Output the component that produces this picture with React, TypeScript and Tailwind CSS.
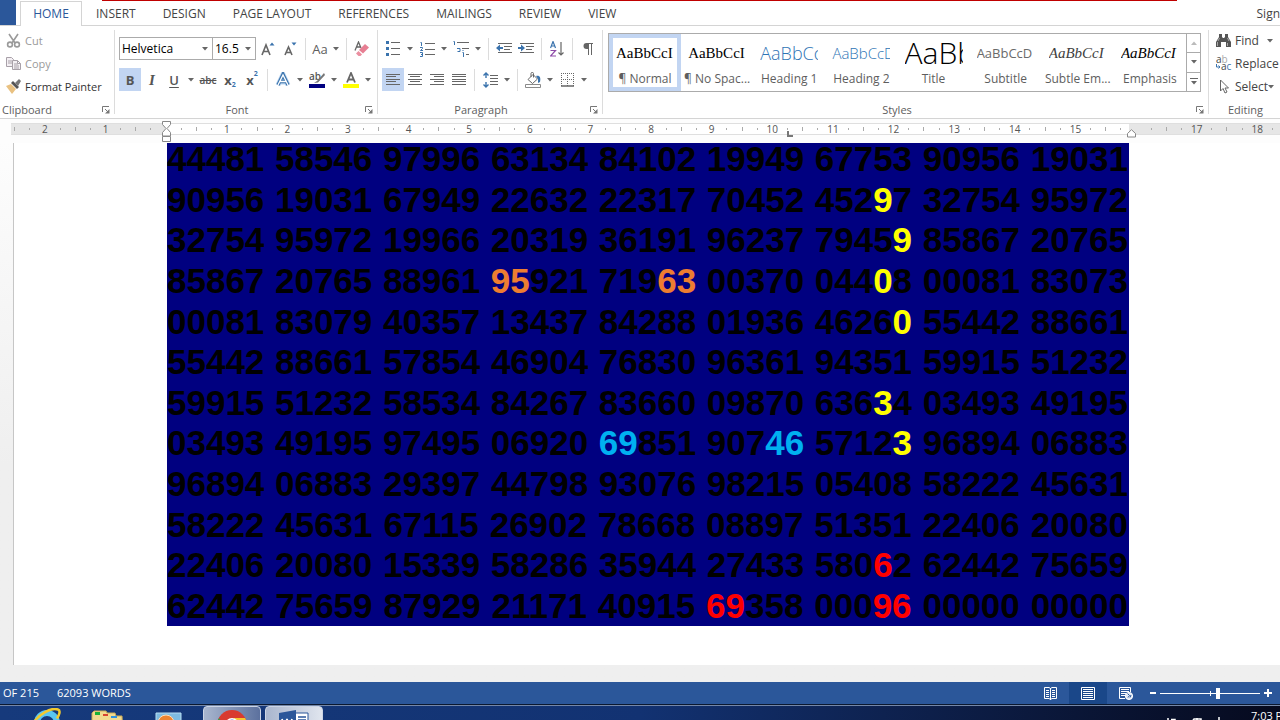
import React from "react";

type Kids = { children?: React.ReactNode };

const BLUE = "#3a73ad";
const GREY = "#666666";

function Arrow({ className = "fill-[#666]" }: { className?: string }) {
  return (
    <svg width="6" height="4" viewBox="0 0 6 4" className={className} aria-hidden="true">
      <path d="M0 0h6L3 3.6z" />
    </svg>
  );
}

function Tool({ label, active, children }: Kids & { label: string; active?: boolean }) {
  return (
    <button
      type="button"
      aria-label={label}
      aria-pressed={active}
      className={`flex h-[23px] w-[22px] shrink-0 items-center justify-center ${active ? "bg-[#c2d5f2]" : "hover:bg-[#d5e1f2]"}`}
    >
      {children}
    </button>
  );
}

function Drop({ label }: { label: string }) {
  return (
    <button type="button" aria-label={label} className="flex h-[23px] w-3 shrink-0 items-center justify-center">
      <Arrow />
    </button>
  );
}

function Sep() {
  return <span className="mx-1 h-[22px] w-px shrink-0 bg-[#dcdcdc]" />;
}

function Launcher({ label }: { label: string }) {
  return (
    <button type="button" aria-label={label} className="shrink-0">
      <svg width="8" height="8" viewBox="0 0 8 8" fill="none" stroke="#777" aria-hidden="true">
        <path d="M.5 6V.5H7M3 3l3 3" />
        <path d="M7.5 3v4.500H3z" fill="#777" stroke="none" />
      </svg>
    </button>
  );
}

function Group({
  name,
  className,
  labelClass = "pr-2.5 text-center",
  launcher = true,
  children,
}: Kids & { name: string; className: string; labelClass?: string; launcher?: boolean }) {
  return (
    <section aria-label={name} className={`flex h-[84px] shrink-0 flex-col border-r border-[#dcdcdc] ${className}`}>
      <div className="h-[75px] shrink-0">{children}</div>
      <div className="flex h-[9px] items-center text-[11px] leading-3 text-[#5e5e5e]">
        <span className={`flex-1 ${labelClass}`}>{name}</span>
        {launcher && <Launcher label={`${name} settings`} />}
      </div>
    </section>
  );
}

function Lines({ rows }: { rows: [number, number][] }) {
  return (
    <svg width="16" height="13" viewBox="0 0 16 13" stroke={GREY} aria-hidden="true">
      {rows.map(([a, b], i) => (
        <path key={i} d={`M${a} ${i * 2.5 + 1}H${b}`} strokeWidth="1" shapeRendering="crispEdges" />
      ))}
    </svg>
  );
}

const tabs = ["INSERT", "DESIGN", "PAGE LAYOUT", "REFERENCES", "MAILINGS", "REVIEW", "VIEW"];

function Tabs() {
  return (
    <nav className="flex h-[26px] shrink-0 items-stretch border-b border-[#d4d4d4] text-[12px] leading-4 text-[#444]">
      <span className="mr-1 h-[25px] w-4 shrink-0 bg-[#2b579a]" />
      <a href="#home" className="-mb-px mt-px flex w-[62px] shrink-0 items-center justify-center border border-b-0 border-[#d4d4d4] bg-white text-[#2b579a]">
        HOME
      </a>
      <div className="flex flex-1 flex-col">
        <span className="ml-5 mr-[103px] h-px shrink-0 bg-[#c00000]" />
        <div className="flex flex-1 items-center pl-[14px] pt-0.5">
          <div className="flex gap-[27px]">
            {tabs.map((t) => (
              <a key={t} href={`#${t.toLowerCase().replace(" ", "-")}`} className="whitespace-nowrap">
                {t}
              </a>
            ))}
          </div>
          <a href="#sign-in" className="ml-auto">Sign</a>
        </div>
      </div>
    </nav>
  );
}

function Clipboard() {
  return (
    <Group name="Clipboard" className="w-[115px] pr-1" labelClass="pl-0.5">
      <div className="-mt-px flex flex-col pl-1.5 text-[11px] leading-[23px]">
        <button type="button" className="flex items-center gap-1 text-[#9a9a9a]">
          <svg width="15" height="15" viewBox="0 0 15 15" fill="none" stroke="#9a9a9a" strokeWidth="1.600" aria-hidden="true">
            <path d="M3 1l6 9M12 1L6 10" />
            <circle cx="4" cy="11.500" r="2.400" />
            <circle cx="11" cy="11.500" r="2.400" />
          </svg>
          Cut
        </button>
        <button type="button" className="flex items-center gap-1 text-[#9a9a9a]">
          <svg width="15" height="15" viewBox="0 0 15 15" fill="#f4f0f4" stroke="#a8a0a8" aria-hidden="true">
            <path d="M.5 1.500h5l2 2v7h-7zM2 5h4M2 7h4" />
            <path d="M6.500 4.500h5l3 3v6h-8zM8 8h4M8 10h5M8 12h5M11.500 4.500v3h3" />
          </svg>
          Copy
        </button>
        <button type="button" className="flex items-center gap-1 whitespace-nowrap text-[#333]">
          <svg width="15" height="15" viewBox="0 0 15 15" aria-hidden="true">
            <path d="M0 7l5-2 5 5-4 5z" fill="#e9c181" />
            <path d="M5 4l2-2 6 6-2 2z" fill="#555" />
            <path d="M9 4l4-4 2 2-3 5z" fill="#777" />
          </svg>
          Format Painter
        </button>
      </div>
    </Group>
  );
}

function FontGroup() {
  return (
    <Group name="Font" className="w-[263px] pl-1 pr-1">
      <div className="-mt-px mb-2 flex items-center pt-2">
        <label className="flex h-[23px] w-[94px] shrink-0 items-center border border-[#ababab] bg-white pr-1">
          <input aria-label="Font name" defaultValue="Helvetica" className="w-0 flex-1 px-0.5 text-[12px] text-black outline-none" />
          <Arrow />
        </label>
        <label className="mr-px flex h-[23px] w-[43px] shrink-0 items-center border border-l-0 border-[#ababab] bg-white pr-1">
          <input aria-label="Font size" defaultValue="16.5" className="w-0 flex-1 px-0.5 text-[12px] text-black outline-none" />
          <Arrow />
        </label>
        <Tool label="Grow font">
          <svg width="14" height="14" viewBox="0 0 14 14" fill="none" aria-hidden="true">
            <path d="M1 13L5 3l4 10M2.500 9.500h5" stroke={GREY} strokeWidth="1.600" />
            <path d="M8.500 3.500L11 .5l2.500 3z" fill={BLUE} />
          </svg>
        </Tool>
        <Tool label="Shrink font">
          <svg width="14" height="14" viewBox="0 0 14 14" fill="none" aria-hidden="true">
            <path d="M2 13l3.500-8L9 13M3.500 10.500h4" stroke={GREY} strokeWidth="1.600" />
            <path d="M8.500.5h5L11 3.500z" fill={BLUE} />
          </svg>
        </Tool>
        <Sep />
        <button type="button" aria-label="Change case" className="w-5 shrink-0 text-[13px] leading-5 text-[#5e5e5e]">Aa</button>
        <Drop label="Case options" />
        <Sep />
        <Tool label="Clear formatting">
          <svg width="16" height="16" viewBox="0 0 16 16" aria-hidden="true">
            <path d="M1 9.500L4.500 1 7 7M2.500 6h4" fill="none" stroke={GREY} strokeWidth="1.300" />
            <path d="M11 3l4 3.500-6 6L5 9z" fill="#e77f93" />
            <path d="M4.500 10L8 13.500 6.500 15H4.500l-2.500-2.500z" fill="#eb8fa0" />
          </svg>
        </Tool>
      </div>
      <div className="flex items-center text-[13px] leading-5 text-[#555]">
        <Tool label="Bold" active><b>B</b></Tool>
        <Tool label="Italic"><i className="font-['Liberation_Serif',serif] text-[15px] font-bold">I</i></Tool>
        <Tool label="Underline"><span className="font-semibold underline underline-offset-2">U</span></Tool>
        <Drop label="Underline options" />
        <Tool label="Strikethrough"><span className="text-[10px] font-semibold line-through">abc</span></Tool>
        <Tool label="Subscript"><b>x</b><span className="self-end text-[7px] font-bold leading-3 text-[#3a73ad]">2</span></Tool>
        <Tool label="Superscript"><b>x</b><span className="self-start text-[7px] font-bold leading-3 text-[#3a73ad]">2</span></Tool>
        <Sep />
        <Tool label="Text effects">
          <svg width="16" height="16" viewBox="0 0 16 16" aria-hidden="true">
            <path d="M3 13L8 2.500 13 13M5 10h6" fill="none" stroke="#bcd6f0" strokeWidth="5" />
            <path d="M3 13L8 2.500 13 13M5 9.500h6" fill="none" stroke={BLUE} strokeWidth="3.400" />
            <path d="M3 13L8 3l5 10M5 9.500h6" fill="none" stroke="#fff" strokeWidth="1.300" />
          </svg>
        </Tool>
        <Drop label="Effect options" />
        <Tool label="Highlight colour">
          <svg width="16" height="16" viewBox="0 0 16 16" overflow="visible" aria-hidden="true">
            <text x="0" y="8" fontSize="10" fontWeight="600" fill="#555">ab</text>
            <path d="M15 1L8 9l-3 2 4-.5L16 3z" fill="#777" />
            <path d="M0 12h16v4H0z" fill="#000080" />
          </svg>
        </Tool>
        <Drop label="Highlight options" />
        <Tool label="Font colour">
          <svg width="16" height="16" viewBox="0 0 16 16" aria-hidden="true">
            <path d="M4 10.500L8 1l4 9.500M5 7.500h6" fill="none" stroke={GREY} strokeWidth="1.800" />
            <path d="M0 12h16v4H0z" fill="#ffff00" />
          </svg>
        </Tool>
        <Drop label="Font colour options" />
      </div>
    </Group>
  );
}

function ParagraphGroup() {
  return (
    <Group name="Paragraph" className="w-[225px] pl-1 pr-1">
      <div className="-mt-px mb-2 flex items-center pt-2">
        <Tool label="Bullets">
          <svg width="14" height="15" viewBox="0 0 14 15" aria-hidden="true">
            <path d="M0 0h3v3H0zM0 6h3v3H0zM0 12h3v3H0z" fill={BLUE} />
            <path d="M5 1.500h9M5 7.500h9M5 13.500h9" stroke={GREY} />
          </svg>
        </Tool>
        <Drop label="Bullet options" />
        <Tool label="Numbering">
          <svg width="15" height="16" viewBox="0 0 15 16" aria-hidden="true">
            <path d="M.5 1.500h1V5M0 6.500h2.500v1L.5 9.500H3M0 11.500h2.500v4H0M1 13.500h1.500" fill="none" stroke={BLUE} />
            <path d="M5 2.500h10M5 8.500h10M5 13.500h10" stroke={GREY} />
          </svg>
        </Tool>
        <Drop label="Numbering options" />
        <Tool label="Multilevel list">
          <svg width="17" height="16" viewBox="0 0 17 16" aria-hidden="true">
            <path d="M.5.500h1V4M4 7.500h3M4.500 10.500H7V7.500M9.500 11.500h1V16M10 9v1" fill="none" stroke={BLUE} />
            <path d="M4 1.500h12M9 7.500h7M13 13.500h3" stroke={GREY} />
          </svg>
        </Tool>
        <Drop label="Multilevel options" />
        <Sep />
        <Tool label="Decrease indent">
          <svg width="16" height="12" viewBox="0 0 16 12" aria-hidden="true">
            <path d="M2 .5h14M8 3.500h8M8 6.500h6M2 9.500h14" stroke={GREY} />
            <path d="M0 5l4-3.500V4h3v2H4v2.500z" fill={BLUE} />
          </svg>
        </Tool>
        <Tool label="Increase indent">
          <svg width="16" height="12" viewBox="0 0 16 12" aria-hidden="true">
            <path d="M2 .5h14M8 3.500h8M8 6.500h6M2 9.500h14" stroke={GREY} />
            <path d="M7 5L3 1.500V4H0v2h3v2.500z" fill={BLUE} />
          </svg>
        </Tool>
        <Sep />
        <Tool label="Sort">
          <svg width="14" height="16" viewBox="0 0 14 16" fill="none" aria-hidden="true">
            <path d="M.5 7L3 .5 5.500 7M1.500 5h3" stroke={BLUE} strokeWidth="1.200" />
            <path d="M.5 9.500h5l-5 5.500H6" stroke="#8e4ba8" strokeWidth="1.200" />
            <path d="M11 1v13M8.500 11.500L11 14l2.500-2.500" stroke={GREY} strokeWidth="1.200" />
          </svg>
        </Tool>
        <Sep />
        <Tool label="Show marks">
          <svg width="10" height="12" viewBox="0 0 10 12" aria-hidden="true">
            <path d="M10 0H3.500a3 3 0 000 6H5v6h1V1h2v11h1V1h1z" fill={GREY} />
          </svg>
        </Tool>
      </div>
      <div className="flex items-center">
        <Tool label="Align left" active><Lines rows={[[1, 15], [1, 11], [1, 15], [1, 11], [1, 15]]} /></Tool>
        <Tool label="Centre"><Lines rows={[[1, 15], [3, 13], [1, 15], [3, 13], [1, 15]]} /></Tool>
        <Tool label="Align right"><Lines rows={[[1, 15], [5, 15], [1, 15], [5, 15], [1, 15]]} /></Tool>
        <Tool label="Justify"><Lines rows={[[1, 15], [1, 15], [1, 15], [1, 15], [1, 15]]} /></Tool>
        <Sep />
        <Tool label="Line spacing">
          <svg width="15" height="16" viewBox="0 0 15 16" fill="none" aria-hidden="true">
            <path d="M3 1v5M3 10v5M.5 3.500L3 1l2.500 2.500M.5 12.500L3 15l2.500-2.500" stroke={BLUE} strokeWidth="1.400" />
            <path d="M7 3.500h8M7 6.500h8M7 9.500h8M7 12.500h8" stroke={GREY} />
          </svg>
        </Tool>
        <Drop label="Spacing options" />
        <Sep />
        <Tool label="Shading">
          <svg width="16" height="16" viewBox="0 0 16 16" fill="none" aria-hidden="true">
            <path d="M8 2.500l4.500 4.500-5 4.500L3 7.500zM6 5V1.500C6 0 8.500 0 8.500 1.500v4" stroke={GREY} />
            <path d="M11 4c4-1 5 2 4 6l-2 1V7z" fill={BLUE} />
            <path d="M.5 12.500h15v3H.5z" stroke="#8a8a8a" />
          </svg>
        </Tool>
        <Drop label="Shading options" />
        <Tool label="Borders">
          <svg width="13" height="14" viewBox="0 0 13 14" aria-hidden="true">
            <path d="M0 .5h13M0 6.500h13M.5 0v13M6.500 0v13M12.500 0v13" stroke={GREY} strokeDasharray="1 1" />
            <path d="M0 13h13" stroke={GREY} strokeWidth="1.500" />
          </svg>
        </Tool>
        <Drop label="Border options" />
      </div>
    </Group>
  );
}

const styleItems = [
  { name: "¶ Normal", sample: "AaBbCcI", look: "font-['Liberation_Serif',serif] text-[15px] text-black" },
  { name: "¶ No Spac...", sample: "AaBbCcI", look: "font-['Liberation_Serif',serif] text-[15px] text-black" },
  { name: "Heading 1", sample: "AaBbCc", look: "font-light text-[18px] text-[#2e74b5]" },
  { name: "Heading 2", sample: "AaBbCcD", look: "font-light text-[15px] text-[#2e74b5]" },
  { name: "Title", sample: "AaBb", look: "font-light text-[30px] text-black" },
  { name: "Subtitle", sample: "AaBbCcD", look: "text-[13px] text-[#6a6a6a]" },
  { name: "Subtle Em...", sample: "AaBbCcI", look: "font-['Liberation_Serif',serif] text-[15px] italic text-[#404040]" },
  { name: "Emphasis", sample: "AaBbCcI", look: "font-['Liberation_Serif',serif] text-[15px] italic text-black" },
];

function StylesGroup() {
  return (
    <Group name="Styles" className="min-w-[606px] flex-1 pl-[5px] pr-1">
      <div className="pt-[3px]">
        <div className="mr-[3px] flex h-[59px] justify-between border border-[#ababab]">
          {styleItems.map((s, i) => (
            <button
              key={s.name}
              type="button"
              className={`flex w-[72px] shrink-0 flex-col items-center gap-1 border-4 px-[3px] pt-px ${i === 0 ? "border-[#c2d5f2]" : "border-transparent"}`}
            >
              <span className={`flex h-7 w-[58px] shrink-0 items-center overflow-hidden leading-7 ${s.look}`}>{s.sample}</span>
              <span className="whitespace-nowrap text-[12px] leading-4 text-[#5e5e5e]">{s.name}</span>
            </button>
          ))}
          <div className="flex w-[14px] flex-col divide-y divide-[#ababab] border-l border-[#ababab]">
            <button type="button" aria-label="Scroll up" className="flex flex-1 items-center justify-center"><Arrow className="rotate-180 fill-[#bbb]" /></button>
            <button type="button" aria-label="Scroll down" className="flex flex-1 items-center justify-center"><Arrow /></button>
            <button type="button" aria-label="More styles" className="flex flex-1 flex-col items-center justify-center gap-0.5"><span className="h-px w-2 bg-[#666]" /><Arrow /></button>
          </div>
        </div>
      </div>
    </Group>
  );
}

function EditingGroup() {
  return (
    <Group name="Editing" launcher={false} className="w-[71px] border-r-0 pl-[7px]" labelClass="pl-3">
      <div className="-mt-px flex flex-col overflow-hidden text-[12px] leading-[23px] text-[#444]">
        <button type="button" className="flex items-center gap-1">
          <svg width="15" height="14" viewBox="0 0 15 14" fill="#555" aria-hidden="true">
            <path d="M3 0h3v3l1 1h1l1-1V0h3v3l3 5v5h-5V8H5v5H0V8l3-5z" />
            <path d="M1.500 8v4M3.500 4L2 7M11.500 4L13 7M11.500 9v3" stroke="#bbb" strokeWidth=".8" />
          </svg>
          Find
          <span className="ml-1"><Arrow /></span>
        </button>
        <button type="button" className="flex items-center gap-1">
          <svg width="15" height="15" viewBox="0 0 15 15" overflow="visible" className="shrink-0" aria-hidden="true">
            <text x="0" y="7" fontSize="10" fill="#444">a<tspan fill="#aaa">b</tspan></text>
            <text x="5" y="14" fontSize="10" fill="#444">a<tspan fill={BLUE}>c</tspan></text>
            <path d="M.5 8v3H4M2.500 9.500L4 11l-1.500 1.500" stroke={BLUE} fill="none" />
          </svg>
          Replace
        </button>
        <button type="button" className="flex items-center gap-1">
          <svg width="15" height="15" viewBox="0 0 15 15" fill="none" stroke={GREY} aria-hidden="true">
            <path d="M4.500 1v11l2.500-2.500L9 14l2-1-2-4h3.500z" />
          </svg>
          <span>Select</span>
          <span className="-ml-1"><Arrow /></span>
        </button>
      </div>
    </Group>
  );
}

const rulerLabels = ["2", "1", "", "1", "2", "3", "4", "5", "6", "7", "8", "9", "10", "11", "12", "13", "14", "15", "", "17", "18"];

function Ruler() {
  return (
    <div className="relative grid h-6 shrink-0 overflow-hidden bg-[#fdfdfd] pt-1 text-[10px] leading-3 text-[#555]">
      <div className="flex h-3 pl-[11px] [grid-area:1/1]">
        <span className="w-[155px] shrink-0 border-y border-[#dfdfdf] bg-[#e6e6e6]" />
        <span className="w-[963px] shrink-0 border-y border-[#dfdfdf] bg-white" />
        <span className="flex-1 border-y border-[#dfdfdf] bg-[#e6e6e6]" />
      </div>
      <div className="ml-[7px] grid h-3 w-[1273px] grid-cols-[repeat(21,minmax(0,1fr))] [grid-area:1/1]">
        {rulerLabels.map((n, i) => (
          <div key={i} className="grid grid-cols-4 place-items-center">
            <span className="h-1 w-px bg-[#aaa]" />
            <span className="h-0.5 w-px bg-[#aaa]" />
            <span>{n}</span>
            <span className="h-0.5 w-px bg-[#aaa]" />
          </div>
        ))}
      </div>
      <svg width="9" height="22" viewBox="0 0 9 22" className="absolute left-[162px] top-[2px]" fill="#fff" stroke="#888" aria-hidden="true">
        <path d="M.5.500h8v3L5 7.500l3.500 4V15h-8v-3.500L4 7.500.5 3.500zM.5 15.500h8v5h-8z" />
      </svg>
      <svg width="9" height="9" viewBox="0 0 9 9" className="absolute left-[1127px] top-[10px]" fill="#fff" stroke="#888" aria-hidden="true">
        <path d="M4.500.700l4 3.800v3.500h-8V4.500z" />
      </svg>
      <svg width="6" height="6" viewBox="0 0 6 6" className="absolute left-[787px] top-3" aria-hidden="true">
        <path d="M1 0v5h5" fill="none" stroke="#777" strokeWidth="2" />
      </svg>
    </div>
  );
}

/* y, o, b and r open a coloured run that ends at the next slash. */
const rows = [
  "44481 58546 97996 63134 84102 19949 67753 90956 19031",
  "90956 19031 67949 22632 22317 70452 452y9/7 32754 95972",
  "32754 95972 19966 20319 36191 96237 7945y9/ 85867 20765",
  "85867 20765 88961 o95/921 719o63/ 00370 044y0/8 00081 83073",
  "00081 83079 40357 13437 84288 01936 4626y0/ 55442 88661",
  "55442 88661 57854 46904 76830 96361 94351 59915 51232",
  "59915 51232 58534 84267 83660 09870 636y3/4 03493 49195",
  "03493 49195 97495 06920 b69/851 907b46/ 5712y3/ 96894 06883",
  "96894 06883 29397 44798 93076 98215 05408 58222 45631",
  "58222 45631 67115 26902 78668 08897 51351 22406 20080",
  "22406 20080 15339 58286 35944 27433 580r6/2 62442 75659",
  "62442 75659 87929 21171 40915 r69/358 000r96/ 00000 00000",
];

const inks: Record<string, string> = {
  y: "text-[#ffff00]",
  o: "text-[#ed7d31]",
  b: "text-[#00b0f0]",
  r: "text-[#ff0000]",
};

function Row({ text }: { text: string }) {
  const parts = text.split(/([yobr]\d+\/)/);
  return (
    <p className="flex items-center">
      <span className="w-full whitespace-nowrap [text-align-last:justify]">
        {parts.map((p, i) =>
          inks[p[0]] ? (
            <span key={i} className={inks[p[0]]}>{p.slice(1, -1)}</span>
          ) : (
            p
          ),
        )}
      </span>
    </p>
  );
}

function Document() {
  return (
    <main className="flex flex-1 bg-gradient-to-b from-[#fdfdfd] to-[#efefef] to-60% pb-[17px] pl-[13px]">
      <div className="flex-1 border-l border-[#c6c6c6] bg-white pb-[39px] pl-[153px]">
        <div className="flex h-[483px] w-[962px] flex-col justify-end overflow-hidden bg-[#000080] pr-px">
          <div className="grid h-[487px] shrink-0 auto-rows-fr font-['Liberation_Sans',Arial,sans-serif] text-[35px] font-bold leading-10 text-black">
            {rows.map((r, i) => (
              <Row key={i} text={r} />
            ))}
          </div>
        </div>
      </div>
    </main>
  );
}

function StatusBar() {
  return (
    <footer className="flex h-[22px] shrink-0 items-center bg-[#2b579a] pl-[3px] pr-2 text-[11px] text-white">
      <span>OF 215</span>
      <span className="ml-[18px]">62093 WORDS</span>
      <div className="ml-auto flex items-center">
        <button type="button" aria-label="Read mode" className="flex h-[22px] w-[38px] items-center justify-center">
          <svg width="13" height="13" viewBox="0 0 13 13" fill="none" stroke="#fff" aria-hidden="true">
            <path d="M.5.500H5l1.500 1L8 .5h4.500v11H8l-1.500 1-1.500-1H.5zM6.500 1v12M2 3.500h3M2 5.500h3M2 7.500h3M2 9.500h3M8 3.500h3M8 5.500h3M8 7.500h3M8 9.500h3" />
          </svg>
        </button>
        <button type="button" aria-label="Print layout" className="flex h-[22px] w-[38px] items-center justify-center bg-[#1a4789]">
          <svg width="14" height="13" viewBox="0 0 14 13" fill="none" stroke="#fff" aria-hidden="true">
            <path d="M.5.500h13v12H.5zM2 2.500h10M2 4.500h10M2 6.500h10M2 8.500h10M2 10.500h10" />
          </svg>
        </button>
        <button type="button" aria-label="Web layout" className="flex h-[22px] w-[38px] items-center justify-center">
          <svg width="14" height="13" viewBox="0 0 14 13" fill="none" stroke="#fff" aria-hidden="true">
            <path d="M6 11.500H.5V.5h11V5M2 2.500h8M2 4.500h8M2 6.500h5M2 8.500h4" />
            <circle cx="10" cy="9" r="3.600" fill="#dfe8f5" />
            <path d="M8.500 6.500l2 2-1.500 2M12 8l-1 2.500" stroke="#2b579a" />
          </svg>
        </button>
        <button type="button" aria-label="Zoom out" className="ml-[5px] h-0.5 w-1.5 bg-white" />
        <div className="relative ml-1 flex h-3 w-[100px] items-center">
          <input type="range" aria-label="Zoom" defaultValue="58" className="absolute inset-0 opacity-0" />
          <span className="h-px w-[50px] bg-white" />
          <span className="h-[5px] w-px bg-white" />
          <span className="h-px w-[5px] bg-white" />
          <span className="h-[11px] w-1 bg-white" />
          <span className="h-px flex-1 bg-white" />
        </div>
        <button type="button" aria-label="Zoom in" className="ml-1">
          <svg width="8" height="8" viewBox="0 0 8 8" aria-hidden="true"><path d="M3 0h2v3h3v2H5v3H3V5H0V3h3z" fill="#fff" /></svg>
        </button>
      </div>
    </footer>
  );
}

function Taskbar() {
  return (
    <footer className="flex h-4 shrink-0 items-start overflow-hidden border-t border-[#0a1830] bg-gradient-to-r from-[#163a7c] via-[#123272] to-[#060a1e] text-white">
      <div className="flex h-[15px] w-full items-start border-t border-[#7487a8]">
        <button type="button" aria-label="Browser" className="ml-[30px] mt-[2px] h-3 w-8 overflow-hidden">
          <svg width="32" height="28" viewBox="0 0 32 28" fill="none" aria-hidden="true">
            <circle cx="17" cy="15" r="10" stroke="#59c5f2" strokeWidth="6" />
            <path d="M3 16C8 6 22-1 28 1.500c3 1 1 6-1 9" stroke="#f3c92e" strokeWidth="2.500" />
          </svg>
        </button>
        <button type="button" aria-label="Files" className="ml-[29px] mt-[4px] h-3 w-9 overflow-hidden">
          <svg width="34" height="26" viewBox="0 0 34 26" aria-hidden="true">
            <path d="M1 3l2-2h12l1 2h8l1 3h6l1 20H1z" fill="#f2da8f" stroke="#c9a957" />
            <path d="M4 2h5v3H4z" fill="#19b236" /><path d="M12 4h5v2h-5z" fill="#d8442f" /><path d="M20 6h6v2h-6z" fill="#2e93e0" />
          </svg>
        </button>
        <button type="button" aria-label="Media" className="ml-[28px] mt-[6px] h-3 w-8 overflow-hidden">
          <svg width="30" height="24" viewBox="0 0 30 24" aria-hidden="true">
            <path d="M1 1h25v22H1z" fill="#7fbbe0" stroke="#b8ddf2" /><circle cx="11" cy="11" r="8" fill="#ee8430" stroke="#ffe0bb" />
          </svg>
        </button>
        <button type="button" aria-label="Chrome" className="ml-4 flex h-[15px] w-[58px] justify-center overflow-hidden rounded-t border border-[#ccd5e5] bg-gradient-to-r from-[#a9b6ce] to-[#5c719e]">
          <svg width="32" height="32" viewBox="0 0 32 32" className="mt-0.5 shrink-0" aria-hidden="true">
            <circle cx="16" cy="16" r="15" fill="#d93a2f" /><path d="M1 18a15 15 0 012-9l8 12z" fill="#2ea04d" /><path d="M17 9h12a15 15 0 012 9z" fill="#f6c631" />
            <circle cx="16" cy="16" r="7" fill="#fff" /><circle cx="16" cy="16" r="5.500" fill="#3f7fe0" />
          </svg>
        </button>
        <button type="button" aria-label="Word" className="ml-1 flex h-[15px] w-[58px] justify-center overflow-hidden rounded-t border border-[#ccd5e5] bg-gradient-to-r from-[#a9b6ce] to-[#e0e5ee]">
          <svg width="32" height="28" viewBox="0 0 32 28" className="mt-[3px] shrink-0" aria-hidden="true">
            <path d="M17 3h13v24H17z" fill="#fff" stroke="#2b579a" /><path d="M20 7h8M20 10h8M20 13h8" stroke="#2b579a" strokeWidth="1.500" />
            <path d="M1 3l17-3v28L1 25z" fill="#2b579a" />
            <path d="M4 9l2.500 10L9 9l2.500 10L14 9" fill="none" stroke="#fff" strokeWidth="1.800" />
          </svg>
        </button>
        <div className="ml-auto mt-[11px] h-1 w-[56px] overflow-hidden">
          <svg width="56" height="16" viewBox="0 0 56 16" fill="none" stroke="#fff" aria-hidden="true">
            <path d="M1 1v15M4 2.500h4v4M24 6l3-4h7v8M30 1v10M52 0v12" strokeWidth="1.500" />
          </svg>
        </div>
        <span className="ml-[28px] mt-1 w-[29px] overflow-hidden whitespace-nowrap text-[11px] leading-3">7:03 PM</span>
      </div>
    </footer>
  );
}

export default function App() {
  return (
    <div className="flex h-screen min-h-[720px] flex-col overflow-hidden bg-white font-['Open_Sans','Noto_Sans',sans-serif]">
      <Tabs />
      <div className="flex h-[93px] shrink-0 overflow-hidden border-b border-[#d4d4d4] pt-1">
        <Clipboard />
        <FontGroup />
        <ParagraphGroup />
        <StylesGroup />
        <EditingGroup />
      </div>
      <Ruler />
      <Document />
      <StatusBar />
      <Taskbar />
    </div>
  );
}
